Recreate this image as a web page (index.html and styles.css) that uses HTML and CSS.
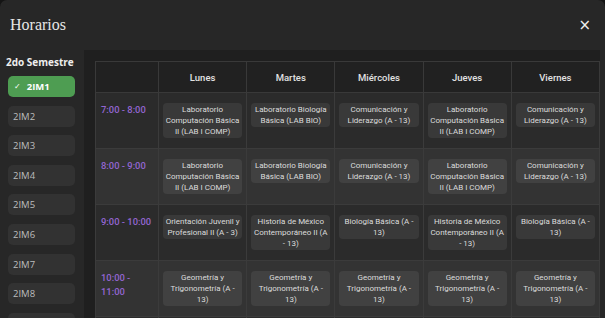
FILE: index.html
```html
<!DOCTYPE html>
<html lang="es">
<head>
<meta charset="utf-8">
<link rel="stylesheet" href="styles.css">
</head>
<body>
<div class="modal">
  <header class="modal-header">
    <h1 class="title">Horarios</h1>
    <span class="close">×</span>
  </header>
  <div class="modal-body">
    <aside class="sidebar">
      <div class="sem-title">2do Semestre</div>
      <div class="groups">
        <div class="group active"><span class="check">✓</span>2IM1</div>
        <div class="group">2IM2</div>
        <div class="group">2IM3</div>
        <div class="group">2IM4</div>
        <div class="group">2IM5</div>
        <div class="group">2IM6</div>
        <div class="group">2IM7</div>
        <div class="group">2IM8</div>
        <div class="group">2IM9</div>
      </div>
    </aside>
    <main class="main">
      <table class="sched">
        <colgroup>
          <col class="c-time"><col><col><col><col><col>
        </colgroup>
        <thead>
          <tr><th></th><th>Lunes</th><th>Martes</th><th>Miércoles</th><th>Jueves</th><th>Viernes</th></tr>
        </thead>
        <tbody>
          <tr>
            <td class="time">7:00 - 8:00</td>
            <td><div class="card">Laboratorio Computación Básica II (LAB I COMP)</div></td>
            <td><div class="card">Laboratorio Biología Básica (LAB BIO)</div></td>
            <td><div class="card">Comunicación y Liderazgo (A - 13)</div></td>
            <td><div class="card">Laboratorio Computación Básica II (LAB I COMP)</div></td>
            <td><div class="card">Comunicación y Liderazgo (A - 13)</div></td>
          </tr>
          <tr>
            <td class="time">8:00 - 9:00</td>
            <td><div class="card">Laboratorio Computación Básica II (LAB I COMP)</div></td>
            <td><div class="card">Laboratorio Biología Básica (LAB BIO)</div></td>
            <td><div class="card">Comunicación y Liderazgo (A - 13)</div></td>
            <td><div class="card">Laboratorio Computación Básica II (LAB I COMP)</div></td>
            <td><div class="card">Comunicación y Liderazgo (A - 13)</div></td>
          </tr>
          <tr>
            <td class="time">9:00 - 10:00</td>
            <td><div class="card">Orientación Juvenil y Profesional II (A - 3)</div></td>
            <td><div class="card">Historia de México Contemporáneo II (A - 13)</div></td>
            <td><div class="card">Biología Básica (A - 13)</div></td>
            <td><div class="card">Historia de México Contemporáneo II (A - 13)</div></td>
            <td><div class="card">Biología Básica (A - 13)</div></td>
          </tr>
          <tr>
            <td class="time">10:00 - 11:00</td>
            <td><div class="card">Geometría y Trigonometría (A - 13)</div></td>
            <td><div class="card">Geometría y Trigonometría (A - 13)</div></td>
            <td><div class="card">Geometría y Trigonometría (A - 13)</div></td>
            <td><div class="card">Geometría y Trigonometría (A - 13)</div></td>
            <td><div class="card">Geometría y Trigonometría (A - 13)</div></td>
          </tr>
          <tr>
            <td class="time">11:00 - 12:00</td>
            <td><div class="card">Geometría y Trigonometría (A - 13)</div></td>
            <td><div class="card">Geometría y Trigonometría (A - 13)</div></td>
            <td><div class="card">Geometría y Trigonometría (A - 13)</div></td>
            <td><div class="card">Geometría y Trigonometría (A - 13)</div></td>
            <td><div class="card">Geometría y Trigonometría (A - 13)</div></td>
          </tr>
        </tbody>
      </table>
    </main>
  </div>
</div>
</body>
</html>
```
FILE: styles.css
```css
* { box-sizing: border-box; }
html, body {
  margin: 0;
  padding: 0;
  background: #141414;
  overflow: hidden;
  height: 318px;
}
.modal {
  background: #272727;
  border-radius: 7px 7px 0 0;
  height: 318px;
  overflow: hidden;
  display: flex;
  flex-direction: column;
}
.modal-header {
  height: 50px;
  flex: none;
  display: flex;
  align-items: center;
  justify-content: space-between;
  padding: 0 14px 0 10px;
}
.title {
  margin: 0;
  font-family: "Liberation Serif", serif;
  font-weight: 400;
  font-size: 16px;
  color: #e6e6e6;
}
.close {
  font-family: "DejaVu Sans", sans-serif;
  font-size: 15px;
  color: #f0f0f0;
  line-height: 1;
}
.modal-body {
  flex: 1;
  display: flex;
  min-height: 0;
}
.sidebar {
  width: 84px;
  flex: none;
  padding: 5px 9px 0 8px;
}
.sem-title {
  font-family: "Open Sans", sans-serif;
  font-weight: 700;
  font-size: 10px;
  color: #eeeeee;
  line-height: 14px;
  margin-left: -2px;
  margin-bottom: 7px;
  white-space: nowrap;
}
.groups {
  display: flex;
  flex-direction: column;
  gap: 8.6px;
}
.group {
  height: 21px;
  border-radius: 5px;
  background: #323232;
  color: #bdbdbd;
  font-family: "Open Sans", sans-serif;
  font-size: 9.5px;
  display: flex;
  align-items: center;
  padding-left: 5px;
}
.group.active {
  background: #4e9d52;
  color: #ffffff;
  font-weight: 700;
  padding-left: 6px;
}
.check {
  font-family: "DejaVu Sans", sans-serif;
  font-weight: 400;
  font-size: 8px;
  margin-right: 6px;
}
.main {
  flex: none;
  width: 516px;
  background: #1f1f1f;
  padding: 11px 0 0 11px;
  overflow: hidden;
}
.sched {
  width: 505px;
  table-layout: fixed;
  border-collapse: collapse;
  font-family: Roboto, sans-serif;
}
.c-time { width: 63px; }
.sched th {
  height: 31px;
  background: #212121;
  border: 1px solid #393939;
  color: #e2e2e2;
  font-size: 9.5px;
  font-weight: 500;
  text-align: center;
  vertical-align: middle;
  padding: 0;
}
.sched td {
  border: 1px solid #3b3b3b;
  vertical-align: top;
  padding: 10px 4px 10px 4px;
}
.sched tbody tr:nth-child(odd) td { background: #2b2b2b; }
.sched tbody tr:nth-child(even) td { background: #333333; }
.sched td.time {
  color: #9466d2;
  font-size: 9.4px;
  font-weight: 500;
  line-height: 14px;
  padding: 10px 5px 0 5px;
}
.card {
  background: rgba(255, 255, 255, 0.07);
  border-radius: 4px;
  padding: 1px 1px;
  color: #dcdcdc;
  font-size: 8px;
  line-height: 11px;
  text-align: center;
}
```
